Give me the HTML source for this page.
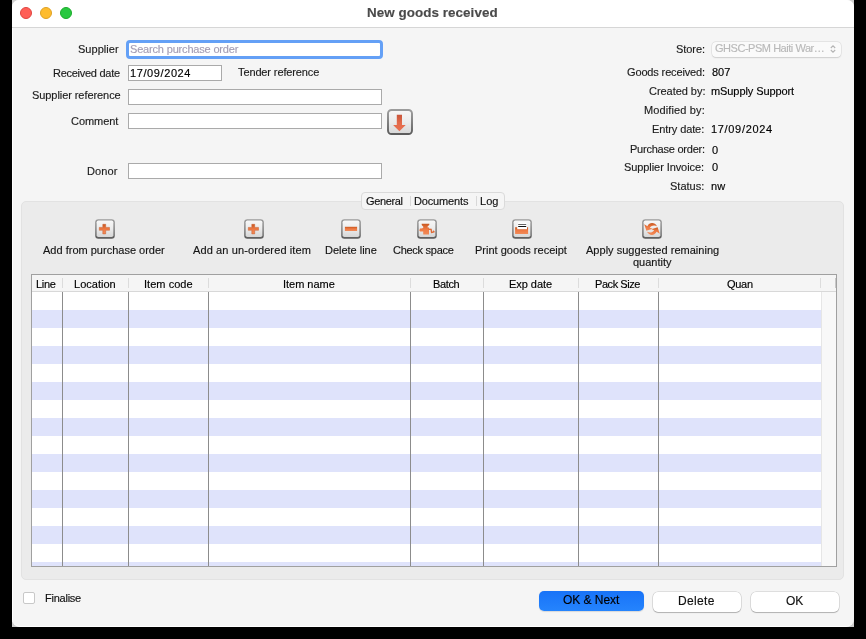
<!DOCTYPE html>
<html><head><meta charset="utf-8">
<style>
*{box-sizing:border-box;margin:0;padding:0}
html,body{width:866px;height:639px;background:#000;overflow:hidden;font-family:"Liberation Sans",sans-serif;color:#222}
.a{position:absolute}
.t{position:absolute;white-space:nowrap;will-change:transform;-webkit-text-stroke:0.15px currentColor}
#frame{position:absolute;left:12px;top:0;width:842px;height:627px;background:#cfcfcf}
#win{position:absolute;left:12px;top:0;width:842px;height:627px;background:#f5f5f5;border-bottom:1px solid #fff;border-radius:7px 7px 8px 8px;overflow:hidden}
#title{position:absolute;left:0;top:0;width:842px;height:28px;background:#fff;border-bottom:1px solid #d6d6d6}
.tl{position:absolute;top:7px;width:12px;height:12px;border-radius:50%}
.fld{position:absolute;background:#fff;border:1px solid #aaaaaa}
.btn{position:absolute;height:20px;border-radius:5px;background:#fff;box-shadow:0 0 0 0.5px rgba(0,0,0,.18),0 1px 1px rgba(0,0,0,.2)}
</style></head><body>
<svg width="0" height="0" style="position:absolute">
<defs>
<linearGradient id="fg" x1="0" y1="0" x2="0" y2="1"><stop offset="0" stop-color="#f7f7f7"/><stop offset="0.5" stop-color="#ebebeb"/><stop offset="1" stop-color="#d6d6d6"/></linearGradient>
<linearGradient id="fb" x1="0" y1="0" x2="0" y2="1"><stop offset="0" stop-color="#9c9c9c"/><stop offset="1" stop-color="#5c5c5c"/></linearGradient>
<linearGradient id="og" x1="0" y1="0" x2="0" y2="1"><stop offset="0" stop-color="#c85820"/><stop offset="0.5" stop-color="#ef7a44"/><stop offset="1" stop-color="#f08a58"/></linearGradient>
<linearGradient id="rg" x1="0" y1="0" x2="0" y2="1"><stop offset="0" stop-color="#c8553a"/><stop offset="0.5" stop-color="#e46a4a"/><stop offset="1" stop-color="#e87050"/></linearGradient>
</defs></svg>
<div id="frame"></div>
<div id="win">
  <div id="title">
    <div class="tl" style="left:8px;background:#ff5f57;border:0.5px solid #e0443e"></div>
    <div class="tl" style="left:28px;background:#febc2e;border:0.5px solid #dea123"></div>
    <div class="tl" style="left:48px;background:#28c840;border:0.5px solid #1aab29"></div>
  </div>
  <div class="a" style="left:0;top:28px;width:1px;height:599px;background:#fff"></div>
</div>

<!-- fields -->
<div class="fld" style="left:126.3px;top:39.5px;width:257px;height:19px;border:3.2px solid #64a0f6;border-radius:4px"></div>
<div class="fld" style="left:128px;top:65px;width:94px;height:16px"></div>
<div class="fld" style="left:128px;top:89px;width:254px;height:16px"></div>
<div class="fld" style="left:128px;top:113px;width:254px;height:16px"></div>
<div class="fld" style="left:128px;top:163px;width:254px;height:16px"></div>
<svg class="a" style="left:387px;top:109px" width="26" height="26" viewBox="0 0 26 26"><rect x="1" y="1" width="24" height="24" rx="3.5" fill="url(#fg)" stroke="url(#fb)" stroke-width="1.9"/><path d="M9.8 5.8h5.2v10.2h3.7l-6.3 6.2-6.3-6.2h3.7z" fill="url(#rg)"/></svg>

<!-- store popup -->
<div class="a" style="left:712px;top:41.5px;width:128.5px;height:15.6px;background:#fafafa;border-radius:4px;box-shadow:0 0 0 0.5px rgba(0,0,0,.09),0 0.5px 1.5px rgba(0,0,0,.12)"></div>
<svg class="a" style="left:829px;top:43px" width="8" height="12" viewBox="0 0 8 12"><path d="M1.8 5L4 2.8L6.2 5M1.8 7L4 9.2L6.2 7" fill="none" stroke="#b4b4b4" stroke-width="1.1"/></svg>

<!-- tab panel -->
<div class="a" style="left:21px;top:201px;width:823px;height:379px;background:#ebebeb;border:1px solid #e2e2e2;border-radius:5px"></div>
<div class="a" style="left:361px;top:192px;width:144px;height:18px;background:#f5f5f5;border:1px solid #dadada;border-radius:4px"></div>
<div class="a" style="left:410px;top:196px;width:1px;height:10px;background:#d8d8d8"></div>
<div class="a" style="left:476px;top:196px;width:1px;height:10px;background:#d8d8d8"></div>

<svg class="a" style="left:95px;top:219px" width="20" height="20" viewBox="0 0 20 20"><rect x="0.2" y="0.2" width="19.6" height="19.6" rx="3.2" fill="url(#fb)"/><rect x="1.6" y="1.5" width="16.8" height="16.6" rx="1.8" fill="url(#fg)"/><path d="M7.8 5.3h2.9v3.1h3.8v2.9h-3.8v3.6h-2.9v-3.6h-3.5v-2.9h3.5z" fill="url(#og)" stroke="#c85a2a" stroke-width="0.6" stroke-opacity="0.8"/></svg>
<svg class="a" style="left:244px;top:219px" width="20" height="20" viewBox="0 0 20 20"><rect x="0.2" y="0.2" width="19.6" height="19.6" rx="3.2" fill="url(#fb)"/><rect x="1.6" y="1.5" width="16.8" height="16.6" rx="1.8" fill="url(#fg)"/><path d="M7.8 5.3h2.9v3.1h3.8v2.9h-3.8v3.6h-2.9v-3.6h-3.5v-2.9h3.5z" fill="url(#og)" stroke="#c85a2a" stroke-width="0.6" stroke-opacity="0.8"/></svg>
<svg class="a" style="left:341px;top:219px" width="20" height="20" viewBox="0 0 20 20"><rect x="0.2" y="0.2" width="19.6" height="19.6" rx="3.2" fill="url(#fb)"/><rect x="1.6" y="1.5" width="16.8" height="16.6" rx="1.8" fill="url(#fg)"/><rect x="3.9" y="7.8" width="12.2" height="4.2" fill="url(#og)"/></svg>
<svg class="a" style="left:417px;top:219px" width="20" height="20" viewBox="0 0 20 20"><rect x="0.2" y="0.2" width="19.6" height="19.6" rx="3.2" fill="url(#fb)"/><rect x="1.6" y="1.5" width="16.8" height="16.6" rx="1.8" fill="url(#fg)"/><path d="M4.7 4.7H12.3V6Q11.2 6.8 10.6 7.4V8.5H12V15.6H6.2V12.5L3.2 12.6L2.3 11.5L3 9.4L4.4 9.6L6.2 9.1V7.6Q5.2 6.8 4.7 6Z" fill="url(#og)"/><path d="M11.5 10.2L14.1 10.4L14.6 13.4L16 13.1L16.6 12.4L17.4 13.4" fill="none" stroke="#e06a36" stroke-width="1.4"/></svg>
<svg class="a" style="left:512px;top:219px" width="20" height="20" viewBox="0 0 20 20"><rect x="0.2" y="0.2" width="19.6" height="19.6" rx="3.2" fill="url(#fb)"/><rect x="1.6" y="1.5" width="16.8" height="16.6" rx="1.8" fill="url(#fg)"/><path d="M6 3.6h8.6l.6 6.6H5.2z" fill="#fff"/><rect x="6.2" y="5" width="8" height="0.9" fill="#555"/><rect x="6.2" y="7" width="8" height="1" fill="#111"/><path d="M3.1 8.2H5.2V10.2H15V8.2H16.1V15H3.1Z" fill="url(#og)"/></svg>
<svg class="a" style="left:642px;top:219px" width="20" height="20" viewBox="0 0 20 20"><rect x="0.2" y="0.2" width="19.6" height="19.6" rx="3.2" fill="url(#fb)"/><rect x="1.6" y="1.5" width="16.8" height="16.6" rx="1.8" fill="url(#fg)"/><path d="M15 7.2C13 3.2 7.2 3 5.4 7.2L2.2 5.2L4.4 11.8L10.6 9.8L7.8 8.8C9.5 6.2 12.5 5.8 15 7.2Z" fill="url(#og)"/><path d="M5 12.8C7 16.8 12.8 17 14.6 12.8L17.8 14.8L15.6 8.2L9.4 10.2L12.2 11.2C10.5 13.8 7.5 14.2 5 12.8Z" fill="url(#og)"/></svg>

<!-- table -->
<div class="a" style="left:31px;top:274px;width:806px;height:293px;background:#f5f5f5;border:1px solid #a0a0a0"></div>
<div class="a" style="left:32px;top:291px;width:804px;height:1px;background:#d8d8d8"></div>
<div class="a" style="left:821px;top:292px;width:15px;height:274px;background:#f8f8f8;border-left:1px solid #e6e6e6"></div>
<div class="a" style="left:820px;top:278px;width:1px;height:10px;background:#dcdcdc"></div>
<div class="a" style="left:835px;top:278px;width:1px;height:10px;background:#c8c8c8"></div>
<div class="a" style="left:32px;top:292px;width:789px;height:18px;background:#fff"></div>
<div class="a" style="left:32px;top:310px;width:789px;height:18px;background:#dfe3fb"></div>
<div class="a" style="left:32px;top:328px;width:789px;height:18px;background:#fff"></div>
<div class="a" style="left:32px;top:346px;width:789px;height:18px;background:#dfe3fb"></div>
<div class="a" style="left:32px;top:364px;width:789px;height:18px;background:#fff"></div>
<div class="a" style="left:32px;top:382px;width:789px;height:18px;background:#dfe3fb"></div>
<div class="a" style="left:32px;top:400px;width:789px;height:18px;background:#fff"></div>
<div class="a" style="left:32px;top:418px;width:789px;height:18px;background:#dfe3fb"></div>
<div class="a" style="left:32px;top:436px;width:789px;height:18px;background:#fff"></div>
<div class="a" style="left:32px;top:454px;width:789px;height:18px;background:#dfe3fb"></div>
<div class="a" style="left:32px;top:472px;width:789px;height:18px;background:#fff"></div>
<div class="a" style="left:32px;top:490px;width:789px;height:18px;background:#dfe3fb"></div>
<div class="a" style="left:32px;top:508px;width:789px;height:18px;background:#fff"></div>
<div class="a" style="left:32px;top:526px;width:789px;height:18px;background:#dfe3fb"></div>
<div class="a" style="left:32px;top:544px;width:789px;height:18px;background:#fff"></div>
<div class="a" style="left:32px;top:562px;width:789px;height:4px;background:#dfe3fb"></div>
<div class="a" style="left:62px;top:292px;width:1px;height:274px;background:#8c8c8c"></div>
<div class="a" style="left:62px;top:278px;width:1px;height:10px;background:#dcdcdc"></div>
<div class="a" style="left:128px;top:292px;width:1px;height:274px;background:#8c8c8c"></div>
<div class="a" style="left:128px;top:278px;width:1px;height:10px;background:#dcdcdc"></div>
<div class="a" style="left:208px;top:292px;width:1px;height:274px;background:#8c8c8c"></div>
<div class="a" style="left:208px;top:278px;width:1px;height:10px;background:#dcdcdc"></div>
<div class="a" style="left:410px;top:292px;width:1px;height:274px;background:#8c8c8c"></div>
<div class="a" style="left:410px;top:278px;width:1px;height:10px;background:#dcdcdc"></div>
<div class="a" style="left:483px;top:292px;width:1px;height:274px;background:#8c8c8c"></div>
<div class="a" style="left:483px;top:278px;width:1px;height:10px;background:#dcdcdc"></div>
<div class="a" style="left:578px;top:292px;width:1px;height:274px;background:#8c8c8c"></div>
<div class="a" style="left:578px;top:278px;width:1px;height:10px;background:#dcdcdc"></div>
<div class="a" style="left:658px;top:292px;width:1px;height:274px;background:#8c8c8c"></div>
<div class="a" style="left:658px;top:278px;width:1px;height:10px;background:#dcdcdc"></div>

<!-- bottom -->
<div class="a" style="left:23px;top:592px;width:12px;height:12px;background:#fff;border:1px solid #c8c8c8;border-radius:2px"></div>
<div class="btn" style="left:539px;top:591px;width:105px;background:linear-gradient(#1873f8,#2584fd);box-shadow:0 0.5px 1px rgba(0,0,0,.12)"></div>
<div class="btn" style="left:653px;top:592px;width:88px"></div>
<div class="btn" style="left:751px;top:592px;width:88px"></div>

<div class="t" style="left:366.7px;top:5px;font-size:13.4px;line-height:16px;letter-spacing:0.065px;color:#4a4a4a;font-weight:bold">New goods received</div>
<div class="t" style="left:78.4px;top:43px;font-size:11px;line-height:13px;letter-spacing:0.029px;color:#1c1c1c">Supplier</div>
<div class="t" style="left:52.8px;top:67px;font-size:11px;line-height:13px;letter-spacing:-0.267px;color:#1c1c1c">Received date</div>
<div class="t" style="left:31.6px;top:89px;font-size:11px;line-height:13px;letter-spacing:-0.071px;color:#1c1c1c">Supplier reference</div>
<div class="t" style="left:70.9px;top:115px;font-size:11px;line-height:13px;letter-spacing:-0.05px;color:#1c1c1c">Comment</div>
<div class="t" style="left:87.4px;top:165px;font-size:11px;line-height:13px;letter-spacing:0.1px;color:#1c1c1c">Donor</div>
<div class="t" style="left:129.5px;top:43px;font-size:11px;line-height:13px;letter-spacing:-0.175px;color:#a49db4">Search purchase order</div>
<div class="t" style="left:129.9px;top:67px;font-size:11px;line-height:13px;letter-spacing:0.6px;color:#000000">17/09/2024</div>
<div class="t" style="left:238.1px;top:66px;font-size:11px;line-height:13px;letter-spacing:-0.12px;color:#1c1c1c">Tender reference</div>
<div class="t" style="left:675.5px;top:43px;font-size:11px;line-height:13px;letter-spacing:-0.06px;color:#1c1c1c">Store:</div>
<div class="t" style="left:714.8px;top:42px;font-size:11px;line-height:13px;letter-spacing:-0.467px;color:#b9b9b9">GHSC-PSM Haiti War…</div>
<div class="t" style="left:627.2px;top:66px;font-size:11px;line-height:13px;letter-spacing:-0.143px;color:#1c1c1c">Goods received:</div>
<div class="t" style="left:711.6px;top:66px;font-size:11px;line-height:13px;letter-spacing:0.0px;color:#000000">807</div>
<div class="t" style="left:648.6px;top:85px;font-size:11px;line-height:13px;letter-spacing:-0.04px;color:#1c1c1c">Created by:</div>
<div class="t" style="left:710.7px;top:85px;font-size:11px;line-height:13px;letter-spacing:-0.086px;color:#000000">mSupply Support</div>
<div class="t" style="left:644px;top:104px;font-size:11px;line-height:13px;letter-spacing:0.127px;color:#1c1c1c">Modified by:</div>
<div class="t" style="left:652.1px;top:123px;font-size:11px;line-height:13px;letter-spacing:-0.1px;color:#1c1c1c">Entry date:</div>
<div class="t" style="left:710.5px;top:123px;font-size:11px;line-height:13px;letter-spacing:0.678px;color:#000000">17/09/2024</div>
<div class="t" style="left:629.7px;top:143px;font-size:11px;line-height:13px;letter-spacing:-0.229px;color:#1c1c1c">Purchase order:</div>
<div class="t" style="left:711.5px;top:144px;font-size:11px;line-height:13px;letter-spacing:0px;color:#000000">0</div>
<div class="t" style="left:624.4px;top:161px;font-size:11px;line-height:13px;letter-spacing:-0.081px;color:#1c1c1c">Supplier Invoice:</div>
<div class="t" style="left:711.5px;top:161px;font-size:11px;line-height:13px;letter-spacing:0px;color:#000000">0</div>
<div class="t" style="left:670.1px;top:180px;font-size:11px;line-height:13px;letter-spacing:0.0px;color:#1c1c1c">Status:</div>
<div class="t" style="left:710.5px;top:180px;font-size:11px;line-height:13px;letter-spacing:0.2px;color:#000000">nw</div>
<div class="t" style="left:366.3px;top:195px;font-size:11px;line-height:13px;letter-spacing:-0.383px;color:#111">General</div>
<div class="t" style="left:414.4px;top:195px;font-size:11px;line-height:13px;letter-spacing:-0.15px;color:#111">Documents</div>
<div class="t" style="left:480.1px;top:195px;font-size:11px;line-height:13px;letter-spacing:0.05px;color:#111">Log</div>
<div class="t" style="left:42.8px;top:244px;font-size:11px;line-height:13px;letter-spacing:0.005px;color:#141414">Add from purchase order</div>
<div class="t" style="left:193.1px;top:244px;font-size:11px;line-height:13px;letter-spacing:0.11px;color:#141414">Add an un-ordered item</div>
<div class="t" style="left:325.3px;top:244px;font-size:11px;line-height:13px;letter-spacing:-0.02px;color:#141414">Delete line</div>
<div class="t" style="left:392.8px;top:244px;font-size:11px;line-height:13px;letter-spacing:-0.27px;color:#141414">Check space</div>
<div class="t" style="left:475.2px;top:244px;font-size:11px;line-height:13px;letter-spacing:0.011px;color:#141414">Print goods receipt</div>
<div class="t" style="left:586.1px;top:244px;font-size:11px;line-height:13px;letter-spacing:0.021px;color:#141414">Apply suggested remaining</div>
<div class="t" style="left:632.8px;top:256px;font-size:11px;line-height:13px;letter-spacing:0.0px;color:#141414">quantity</div>
<div class="t" style="left:36.1px;top:278px;font-size:11px;line-height:13px;letter-spacing:-0.3px;color:#000">Line</div>
<div class="t" style="left:74.2px;top:278px;font-size:11px;line-height:13px;letter-spacing:0.014px;color:#000">Location</div>
<div class="t" style="left:143.5px;top:278px;font-size:11px;line-height:13px;letter-spacing:0.038px;color:#000">Item code</div>
<div class="t" style="left:282.9px;top:278px;font-size:11px;line-height:13px;letter-spacing:-0.025px;color:#000">Item name</div>
<div class="t" style="left:433.1px;top:278px;font-size:11px;line-height:13px;letter-spacing:-0.375px;color:#000">Batch</div>
<div class="t" style="left:508.7px;top:278px;font-size:11px;line-height:13px;letter-spacing:-0.043px;color:#000">Exp date</div>
<div class="t" style="left:594.8px;top:278px;font-size:11px;line-height:13px;letter-spacing:-0.438px;color:#000">Pack Size</div>
<div class="t" style="left:727.2px;top:278px;font-size:11px;line-height:13px;letter-spacing:-0.3px;color:#000">Quan</div>
<div class="t" style="left:44.7px;top:592px;font-size:11px;line-height:13px;letter-spacing:-0.243px;color:#111">Finalise</div>
<div class="t" style="left:563px;top:593px;font-size:12px;line-height:14px;letter-spacing:-0.05px;color:#000">OK &amp; Next</div>
<div class="t" style="left:678.4px;top:594px;font-size:12px;line-height:14px;letter-spacing:0.36px;color:#111">Delete</div>
<div class="t" style="left:786px;top:594px;font-size:12px;line-height:14px;letter-spacing:0.0px;color:#111">OK</div>
</body></html>
